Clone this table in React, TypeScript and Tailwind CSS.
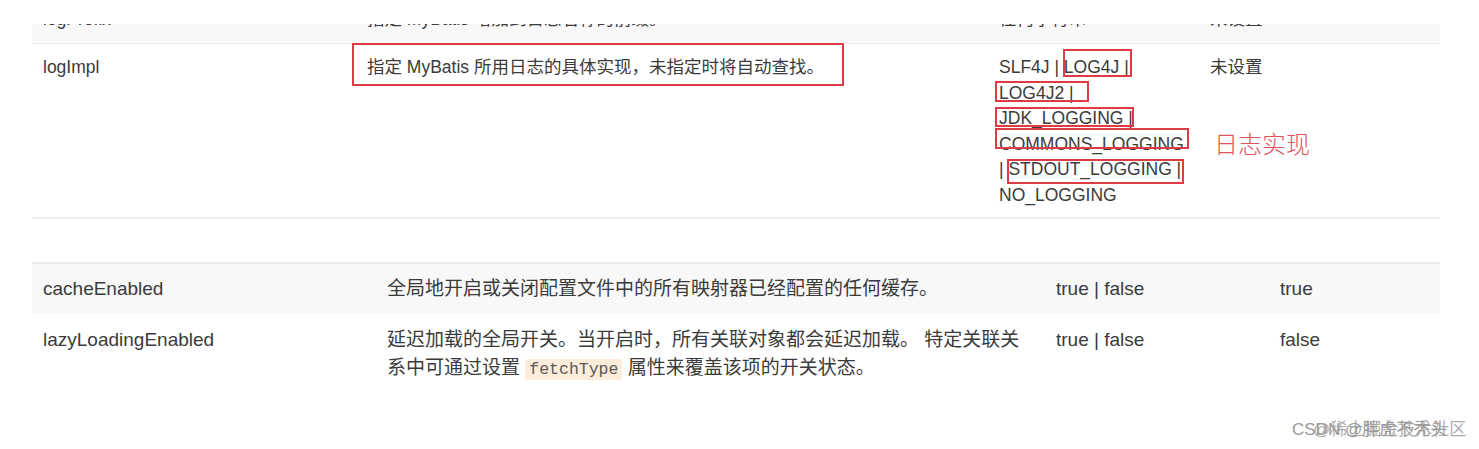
import React from "react";

const sans = "font-['Liberation_Sans','Noto_Sans_CJK_SC',sans-serif]";

function Box({ l, t, w, h }: { l: number; t: number; w: number; h: number }) {
  return (
    <div
      className="absolute border-2 border-[#dd3c44] pointer-events-none"
      style={{ left: l, top: t, width: w, height: h }}
    />
  );
}

export default function App() {
  return (
    <div className={`relative w-[1479px] h-[449px] overflow-hidden bg-white text-[#3b3b3b] ${sans}`}>
      <div className="ml-[32px] w-[1408px] pt-[24px]">
        {/* top settings table (scrolled, first row clipped) */}
        <div className="h-[20px] overflow-hidden bg-[#f8f8f8] border-b border-[#ebebeb]">
          <div className="-mt-[17px] grid grid-cols-[324px_632px_211px_241px] text-[17.5px] leading-[25.6px]">
            <div className="pl-[11px]">logPrefix</div>
            <div className="pl-[11px]">指定 MyBatis 增加到日志名称的前缀。</div>
            <div className="pl-[11px]">任何字符串</div>
            <div className="pl-[11px]">未设置</div>
          </div>
        </div>
        <div className="h-[175px] grid grid-cols-[324px_632px_211px_241px] pt-[11px] text-[17.5px] leading-[25.6px] border-b-2 border-[#efefef]">
          <div className="pl-[11px]">logImpl</div>
          <div className="pl-[11px]">指定 MyBatis 所用日志的具体实现，未指定时将自动查找。</div>
          <div className="pl-[11px] whitespace-nowrap">
            <div>SLF4J | LOG4J |</div>
            <div>LOG4J2 |</div>
            <div>JDK_LOGGING |</div>
            <div>COMMONS_LOGGING</div>
            <div>| STDOUT_LOGGING |</div>
            <div>NO_LOGGING</div>
          </div>
          <div className="pl-[11px]">未设置</div>
        </div>

        <div className="h-[43px]" />

        {/* lower settings table */}
        <div className="border-t-2 border-[#ececec] text-[19px]">
          <div className="h-[50px] grid grid-cols-[344px_669px_224px_171px] items-center bg-[#f8f8f8]">
            <div className="pl-[11px]">cacheEnabled</div>
            <div className="pl-[11px]">全局地开启或关闭配置文件中的所有映射器已经配置的任何缓存。</div>
            <div className="pl-[11px]">true | false</div>
            <div className="pl-[11px]">true</div>
          </div>
          <div className="grid grid-cols-[344px_669px_224px_171px] pt-[12px] leading-[28px]">
            <div className="pl-[11px]">lazyLoadingEnabled</div>
            <div className="pl-[11px] whitespace-nowrap">
              延迟加载的全局开关。当开启时，所有关联对象都会延迟加载。 特定关联关
              <br />
              系中可通过设置{" "}
              <code className="font-['Liberation_Mono',monospace] text-[16.5px] text-[#5a5a5a] bg-[#fcecd9] px-[4px] py-[1px] rounded-[3px]">
                fetchType
              </code>{" "}
              属性来覆盖该项的开关状态。
            </div>
            <div className="pl-[11px]">true | false</div>
            <div className="pl-[11px]">false</div>
          </div>
        </div>
      </div>

      {/* hand-drawn annotations */}
      <Box l={352} t={43} w={492} h={43} />
      <Box l={1063} t={49} w={69} h={28} />
      <Box l={995} t={81} w={94} h={21} />
      <Box l={995} t={107} w={139} h={20} />
      <Box l={995} t={128} w={194} h={21} />
      <Box l={1007} t={159} w={177} h={25} />
      <div className="absolute left-[1214px] top-[131px] text-[24px] leading-none text-[#e0555d] font-['Noto_Sans_CJK_SC',sans-serif] font-light">
        日志实现
      </div>

      {/* watermark */}
      <div className="absolute left-[1292px] top-[419px] text-[17px] leading-[22px] text-[#9a9a9a] whitespace-nowrap">
        <span>CSDN @胖虎不秃头</span>
        <span className="absolute left-[21px] top-0 opacity-80">@稀土掘金技术社区</span>
      </div>
    </div>
  );
}
